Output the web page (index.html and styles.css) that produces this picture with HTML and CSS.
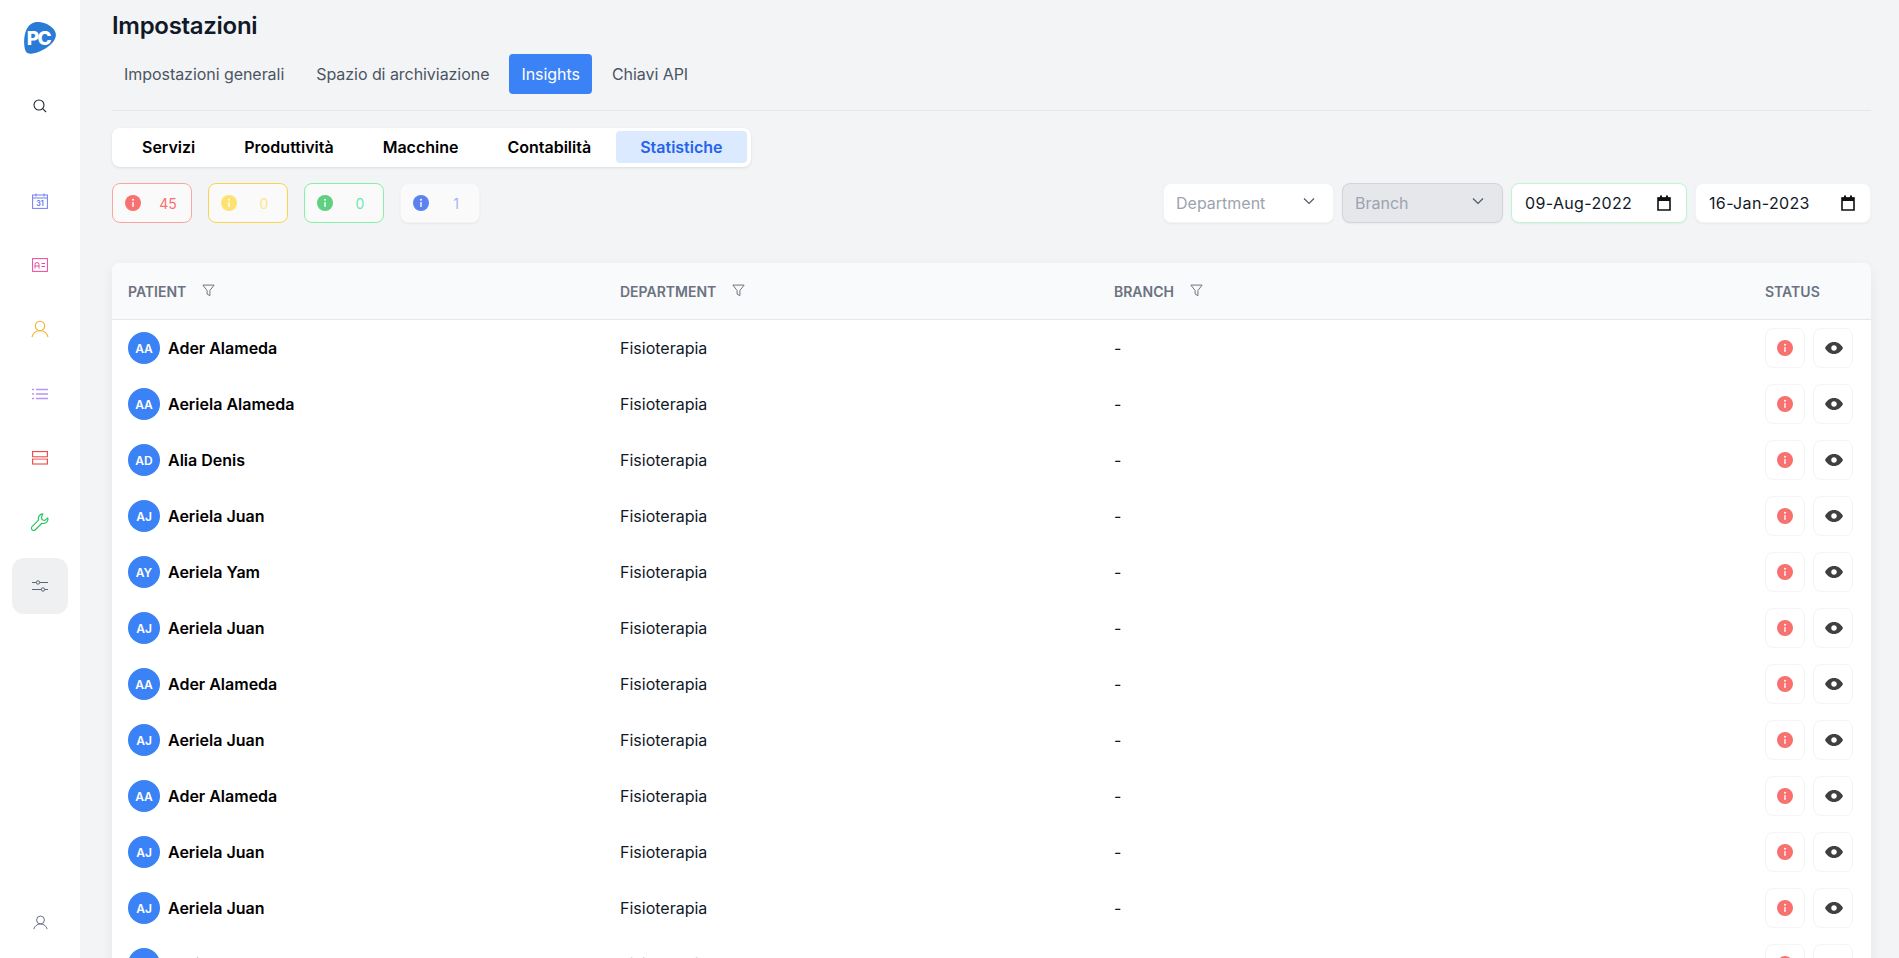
FILE: index.html
```html
<!DOCTYPE html>
<html lang="it">
<head>
<meta charset="utf-8">
<title>Impostazioni</title>
<link rel="stylesheet" href="styles.css">
</head>
<body>
<svg class="defs" width="0" height="0" aria-hidden="true">
  <symbol id="i-info" viewBox="0 0 16 16"><circle cx="8" cy="8" r="8" fill="currentColor"/><rect x="7.300" y="7" width="1.400" height="5" rx=".4" fill="#fff"/><circle cx="8" cy="4.800" r="1" fill="#fff"/></symbol>
  <symbol id="i-eye" viewBox="0 0 18 12"><path fill-rule="evenodd" d="M9 0c4.200 0 7.400 2.700 9 6-1.600 3.300-4.800 6-9 6S1.600 9.300 0 6c1.600-3.300 4.800-6 9-6zm0 3.300c-1.600 0-2.800 1.200-2.800 2.700S7.400 8.700 9 8.700s2.800-1.200 2.800-2.700S10.600 3.300 9 3.300z" fill="currentColor"/></symbol>
  <symbol id="i-filter" viewBox="0 0 12 12"><path d="M.8 1h10.400L7.300 6v4.800L4.700 9.300V6z" fill="none" stroke="currentColor" stroke-width=".9" stroke-linejoin="round"/></symbol>
  <symbol id="i-chev" viewBox="0 0 12 8"><path d="M1 1.500l5 5 5-5" fill="none" stroke="currentColor" stroke-width="1.100"/></symbol>
  <symbol id="i-cal" viewBox="0 0 14 16"><path d="M1 3h12v12H1z" fill="none" stroke="currentColor" stroke-width="1.600"/><path d="M1 2.500h12V6H1zM3 .5h2v2H3zM9 .5h2v2H9z" fill="currentColor"/></symbol>
  <symbol id="i-user" viewBox="0 0 18 18"><circle cx="9" cy="6" r="4.700" fill="none" stroke="currentColor" stroke-width="1.100"/><path d="M1 17c.9-3.600 3.800-6.200 8-6.200s7.100 2.600 8 6.200" fill="none" stroke="currentColor" stroke-width="1.100"/></symbol>
</svg>
<div class="app">
  <aside class="sidebar">
    <div class="logo-wrap">
      <svg class="logo" viewBox="0 0 32 32" width="32" height="32"><path d="M11 .3C17-.7 25 2 29.500 7 33 11 32.500 16 29 20 24 26 15 31 7 31.700 3 32 1 29.500.5 25-.5 18 .5 11 3 6.500 5 3 8 1 11 .3z" fill="#2a7ad6"/><text x="14.500" y="23" text-anchor="middle" class="logo-text">PC</text></svg>
    </div>
    <div class="nav-search">
      <svg class="nav-icon ic-dark" viewBox="0 0 14 14" width="14" height="14"><circle cx="6" cy="6" r="5" fill="none" stroke="currentColor" stroke-width="1.100"/><path d="M9.700 9.700L13 13" stroke="currentColor" stroke-width="1.100"/></svg>
    </div>
    <nav class="nav-list">
      <div class="nav-item ic-blue"><svg viewBox="0 0 16 16" width="16" height="16"><rect x=".6" y="2" width="14.800" height="13.400" fill="none" stroke="currentColor" stroke-width="1"/><path d="M.6 5h14.800" stroke="currentColor"/><path d="M4 .5v3M12 .5v3" stroke="currentColor"/><text x="8" y="13" text-anchor="middle" class="cal-num">31</text></svg></div>
      <div class="nav-item ic-pink"><svg viewBox="0 0 16 14" width="16" height="14"><rect x=".6" y=".6" width="14.800" height="12.800" fill="none" stroke="currentColor"/><path d="M3 10.500V6.500q0-2 2-2t2 2v4M3 8h4M9.500 5.500h3.500M9.500 8.500h3.500" fill="none" stroke="currentColor"/></svg></div>
      <div class="nav-item ic-amber"><svg width="18" height="18"><use href="#i-user"/></svg></div>
      <div class="nav-item ic-violet"><svg viewBox="0 0 16 12" width="16" height="12"><path d="M0 1.500h2M4 1.500h12M0 6h2M4 6h12M0 10.500h2M4 10.500h12" stroke="currentColor" stroke-width="1.300"/></svg></div>
      <div class="nav-item ic-red"><svg viewBox="0 0 16 14" width="16" height="14"><rect x=".6" y=".6" width="14.800" height="5" fill="none" stroke="currentColor" stroke-width="1.100"/><rect x=".6" y="8" width="14.800" height="5" fill="none" stroke="currentColor" stroke-width="1.100"/><rect x="1" y="5.600" width="14" height="2.400" fill="#f8c4c4"/></svg></div>
      <div class="nav-item ic-green"><svg viewBox="0 0 16 16" width="18" height="18"><path d="M10.500.8a4 4 0 0 0-3.700 5.400L1 12.200a1.900 1.900 0 0 0 2.800 2.700l5.900-5.800a4 4 0 0 0 5.200-4.800l-2.600 2.300-2.400-.6-.6-2.300z" fill="none" stroke="currentColor" stroke-width="1" stroke-linejoin="round"/></svg></div>
      <div class="nav-item nav-active ic-slate"><svg viewBox="0 0 16 12" width="16" height="12"><path d="M0 2.500h16M0 9.500h16" stroke="currentColor" stroke-width="1"/><circle cx="6" cy="2.500" r="1.700" fill="#eff0f2" stroke="currentColor"/><circle cx="11" cy="9.500" r="1.700" fill="#eff0f2" stroke="currentColor"/></svg></div>
    </nav>
    <div class="nav-bottom ic-slate"><svg width="15" height="15"><use href="#i-user"/></svg></div>
  </aside>
  <main class="main">
    <h1 class="title">Impostazioni</h1>
    <div class="tabs">
      <a class="tab">Impostazioni generali</a>
      <a class="tab">Spazio di archiviazione</a>
      <a class="tab tab-active">Insights</a>
      <a class="tab">Chiavi API</a>
    </div>
    <div class="subtabs">
      <a class="subtab">Servizi</a>
      <a class="subtab">Produttività</a>
      <a class="subtab">Macchine</a>
      <a class="subtab">Contabilità</a>
      <a class="subtab subtab-active">Statistiche</a>
    </div>
    <div class="toolbar">
      <div class="badges">
        <div class="badge b-red"><svg width="16" height="16"><use href="#i-info"/></svg><span>45</span></div>
        <div class="badge b-yellow"><svg width="16" height="16"><use href="#i-info"/></svg><span>0</span></div>
        <div class="badge b-green"><svg width="16" height="16"><use href="#i-info"/></svg><span>0</span></div>
        <div class="badge b-blue"><svg width="16" height="16"><use href="#i-info"/></svg><span>1</span></div>
      </div>
      <div class="filters">
        <div class="field f-dept"><span class="ph">Department</span><svg class="chev" width="12" height="8"><use href="#i-chev"/></svg></div>
        <div class="field f-branch"><span class="ph">Branch</span><svg class="chev" width="12" height="8"><use href="#i-chev"/></svg></div>
        <div class="field f-date f-focus"><span>09-Aug-2022</span><svg width="14" height="16"><use href="#i-cal"/></svg></div>
        <div class="field f-date"><span>16-Jan-2023</span><svg width="14" height="16"><use href="#i-cal"/></svg></div>
      </div>
    </div>
    <section class="table">
      <div class="row head">
        <div class="th">Patient<svg width="13" height="13"><use href="#i-filter"/></svg></div>
        <div class="th">Department<svg width="13" height="13"><use href="#i-filter"/></svg></div>
        <div class="th">Branch<svg width="13" height="13"><use href="#i-filter"/></svg></div>
        <div class="th">Status</div>
      </div>
      <div class="row"><div class="who"><span class="avatar">AA</span><b>Ader Alameda</b></div><div>Fisioterapia</div><div>-</div><div class="acts"><a class="act"><svg class="red" width="16" height="16"><use href="#i-info"/></svg></a><a class="act"><svg class="eye" width="18" height="12"><use href="#i-eye"/></svg></a></div></div>
      <div class="row"><div class="who"><span class="avatar">AA</span><b>Aeriela Alameda</b></div><div>Fisioterapia</div><div>-</div><div class="acts"><a class="act"><svg class="red" width="16" height="16"><use href="#i-info"/></svg></a><a class="act"><svg class="eye" width="18" height="12"><use href="#i-eye"/></svg></a></div></div>
      <div class="row"><div class="who"><span class="avatar">AD</span><b>Alia Denis</b></div><div>Fisioterapia</div><div>-</div><div class="acts"><a class="act"><svg class="red" width="16" height="16"><use href="#i-info"/></svg></a><a class="act"><svg class="eye" width="18" height="12"><use href="#i-eye"/></svg></a></div></div>
      <div class="row"><div class="who"><span class="avatar">AJ</span><b>Aeriela Juan</b></div><div>Fisioterapia</div><div>-</div><div class="acts"><a class="act"><svg class="red" width="16" height="16"><use href="#i-info"/></svg></a><a class="act"><svg class="eye" width="18" height="12"><use href="#i-eye"/></svg></a></div></div>
      <div class="row"><div class="who"><span class="avatar">AY</span><b>Aeriela Yam</b></div><div>Fisioterapia</div><div>-</div><div class="acts"><a class="act"><svg class="red" width="16" height="16"><use href="#i-info"/></svg></a><a class="act"><svg class="eye" width="18" height="12"><use href="#i-eye"/></svg></a></div></div>
      <div class="row"><div class="who"><span class="avatar">AJ</span><b>Aeriela Juan</b></div><div>Fisioterapia</div><div>-</div><div class="acts"><a class="act"><svg class="red" width="16" height="16"><use href="#i-info"/></svg></a><a class="act"><svg class="eye" width="18" height="12"><use href="#i-eye"/></svg></a></div></div>
      <div class="row"><div class="who"><span class="avatar">AA</span><b>Ader Alameda</b></div><div>Fisioterapia</div><div>-</div><div class="acts"><a class="act"><svg class="red" width="16" height="16"><use href="#i-info"/></svg></a><a class="act"><svg class="eye" width="18" height="12"><use href="#i-eye"/></svg></a></div></div>
      <div class="row"><div class="who"><span class="avatar">AJ</span><b>Aeriela Juan</b></div><div>Fisioterapia</div><div>-</div><div class="acts"><a class="act"><svg class="red" width="16" height="16"><use href="#i-info"/></svg></a><a class="act"><svg class="eye" width="18" height="12"><use href="#i-eye"/></svg></a></div></div>
      <div class="row"><div class="who"><span class="avatar">AA</span><b>Ader Alameda</b></div><div>Fisioterapia</div><div>-</div><div class="acts"><a class="act"><svg class="red" width="16" height="16"><use href="#i-info"/></svg></a><a class="act"><svg class="eye" width="18" height="12"><use href="#i-eye"/></svg></a></div></div>
      <div class="row"><div class="who"><span class="avatar">AJ</span><b>Aeriela Juan</b></div><div>Fisioterapia</div><div>-</div><div class="acts"><a class="act"><svg class="red" width="16" height="16"><use href="#i-info"/></svg></a><a class="act"><svg class="eye" width="18" height="12"><use href="#i-eye"/></svg></a></div></div>
      <div class="row"><div class="who"><span class="avatar">AJ</span><b>Aeriela Juan</b></div><div>Fisioterapia</div><div>-</div><div class="acts"><a class="act"><svg class="red" width="16" height="16"><use href="#i-info"/></svg></a><a class="act"><svg class="eye" width="18" height="12"><use href="#i-eye"/></svg></a></div></div>
      <div class="row"><div class="who"><span class="avatar">AJ</span><b>Aeriela Juan</b></div><div>Fisioterapia</div><div>-</div><div class="acts"><a class="act"><svg class="red" width="16" height="16"><use href="#i-info"/></svg></a><a class="act"><svg class="eye" width="18" height="12"><use href="#i-eye"/></svg></a></div></div>
    </section>
  </main>
</div>
</body>
</html>
```
FILE: styles.css
```css
* { box-sizing: border-box; }
html, body { margin: 0; height: 100%; overflow: hidden; }
body { font-family: Inter, "Liberation Sans", sans-serif; background: #f3f4f6; color: #111827; }
.defs { position: absolute; }
.app { display: flex; height: 958px; overflow: hidden; }

.sidebar { width: 80px; flex: none; background: #fff; display: flex; flex-direction: column; align-items: center; }
.logo-wrap { height: 76px; display: flex; align-items: center; justify-content: center; }
.logo { display: block; }
.logo-text { font: 800 19px Inter, sans-serif; fill: #fff; letter-spacing: -1.5px; }
.cal-num { font: 700 7px Inter, sans-serif; fill: currentColor; }
.nav-search { height: 60px; display: flex; align-items: center; justify-content: center; }
.nav-icon { display: block; }
.nav-list { margin-top: 33px; display: flex; flex-direction: column; }
.nav-item { width: 56px; height: 64.200px; display: flex; align-items: center; justify-content: center; }
.nav-active { height: 56px; margin-top: 4px; background: #eff0f2; border-radius: 12px; }
.nav-bottom { margin-top: auto; height: 72px; display: flex; align-items: center; justify-content: center; }
.ic-dark { color: #1f2937; }
.ic-blue { color: #6d7ff0; }
.ic-pink { color: #ec4899; }
.ic-amber { color: #f2b233; }
.ic-violet { color: #b794f6; }
.ic-red { color: #ef4444; }
.ic-green { color: #22c55e; }
.ic-slate { color: #5b6478; }

.main { flex: 1; min-width: 0; padding: 0 28px 0 32px; }
.title { margin: 0; height: 54px; padding-top: 11px; font-size: 24px; line-height: 30px; font-weight: 600; letter-spacing: -0.3px; color: #111827; }
.tabs { display: flex; gap: 8px; padding-bottom: 16px; border-bottom: 1px solid #e5e7eb; }
.tab { height: 40px; padding: 0 12px; display: flex; align-items: center; font-size: 16px; letter-spacing: -0.05px; color: #4b5563; border-radius: 4px; }
.tab-active { background: #3b82f6; color: #fff; }

.subtabs { margin-top: 17px; width: 639px; height: 39px; padding: 3px 4px 3px 6px; gap: 1px; background: #fff; border-radius: 8px; display: flex; box-shadow: 0 1px 3px rgba(0,0,0,.1); }
.subtab { height: 32px; padding: 0 24px; display: flex; align-items: center; justify-content: center; font-size: 16px; font-weight: 600; color: #000; border-radius: 4px; }
.subtab-active { background: #dbeafe; color: #2563eb; }

.toolbar { margin-top: 16px; display: flex; justify-content: space-between; align-items: flex-start; }
.badges { display: flex; gap: 16px; }
.badge { width: 80px; height: 40px; padding: 0 12px; display: flex; align-items: center; gap: 18px; font-size: 14px; border: 1px solid; border-radius: 8px; background: #fafafa; }
.badge span { flex: 1; text-align: center; padding-right: 2px; }
.b-red { border-color: #fca5a5; color: #f87171; }
.b-yellow { border-color: #fcd34d; color: #fde68a; }
.b-yellow svg { color: #fde272; }
.b-green { border-color: #86efac; color: #6ee7b7; }
.b-green svg { color: #5fcf80; }
.b-blue { border-color: #f3f4f6; color: #a5b4fc; box-shadow: 0 1px 2px rgba(0,0,0,.05); }
.b-blue svg { color: #5b82ee; }

.filters { display: flex; gap: 8px; }
.field { height: 40px; padding: 0 15px 0 12px; display: flex; align-items: center; justify-content: space-between; background: #fff; border: 1px solid #f3f4f6; border-radius: 8px; font-size: 16px; color: #111827; box-shadow: 0 1px 2px rgba(0,0,0,.05); }
.field svg { color: #4b5563; flex: none; }
.field .chev { margin: 0 3px 4px 0; }
.f-dept { width: 171px; }
.f-branch { width: 161px; background: #e5e7eb; border-color: #d1d5db; }
.f-date { width: 176px; padding-left: 13px; letter-spacing: .35px; }
.f-date svg { color: #111; }
.f-focus { border-color: #bbf7d0; }
.ph { color: #9ca3af; }

.table { margin-top: 40px; background: #fff; border-radius: 8px 8px 0 0; box-shadow: 0 4px 12px rgba(0,0,0,.06); font-size: 16px; }
.row { display: grid; grid-template-columns: 492px 494px 1fr 106px; height: 56px; align-items: center; padding-left: 16px; }
.head { height: 57px; background: #f9fafb; border-bottom: 1px solid #e5e7eb; border-radius: 8px 8px 0 0; }
.th { display: flex; align-items: center; gap: 16px; font-size: 14px; font-weight: 600; text-transform: uppercase; color: #6b7280; }
.th svg { color: #6b7280; margin-top: -2px; }
.who { display: flex; align-items: center; gap: 8px; }
.who b { font-weight: 600; color: #000; }
.avatar { width: 32px; height: 32px; border-radius: 50%; background: #3b82f6; color: #fff; font-size: 12px; font-weight: 600; display: flex; align-items: center; justify-content: center; }
.acts { display: flex; gap: 8px; }
.act { width: 40px; height: 40px; display: flex; align-items: center; justify-content: center; background: #fff; border: 1px solid #f3f4f6; border-radius: 8px; }
.red { color: #f87171; }
.eye { color: #404040; margin-left: 1px; }
```
